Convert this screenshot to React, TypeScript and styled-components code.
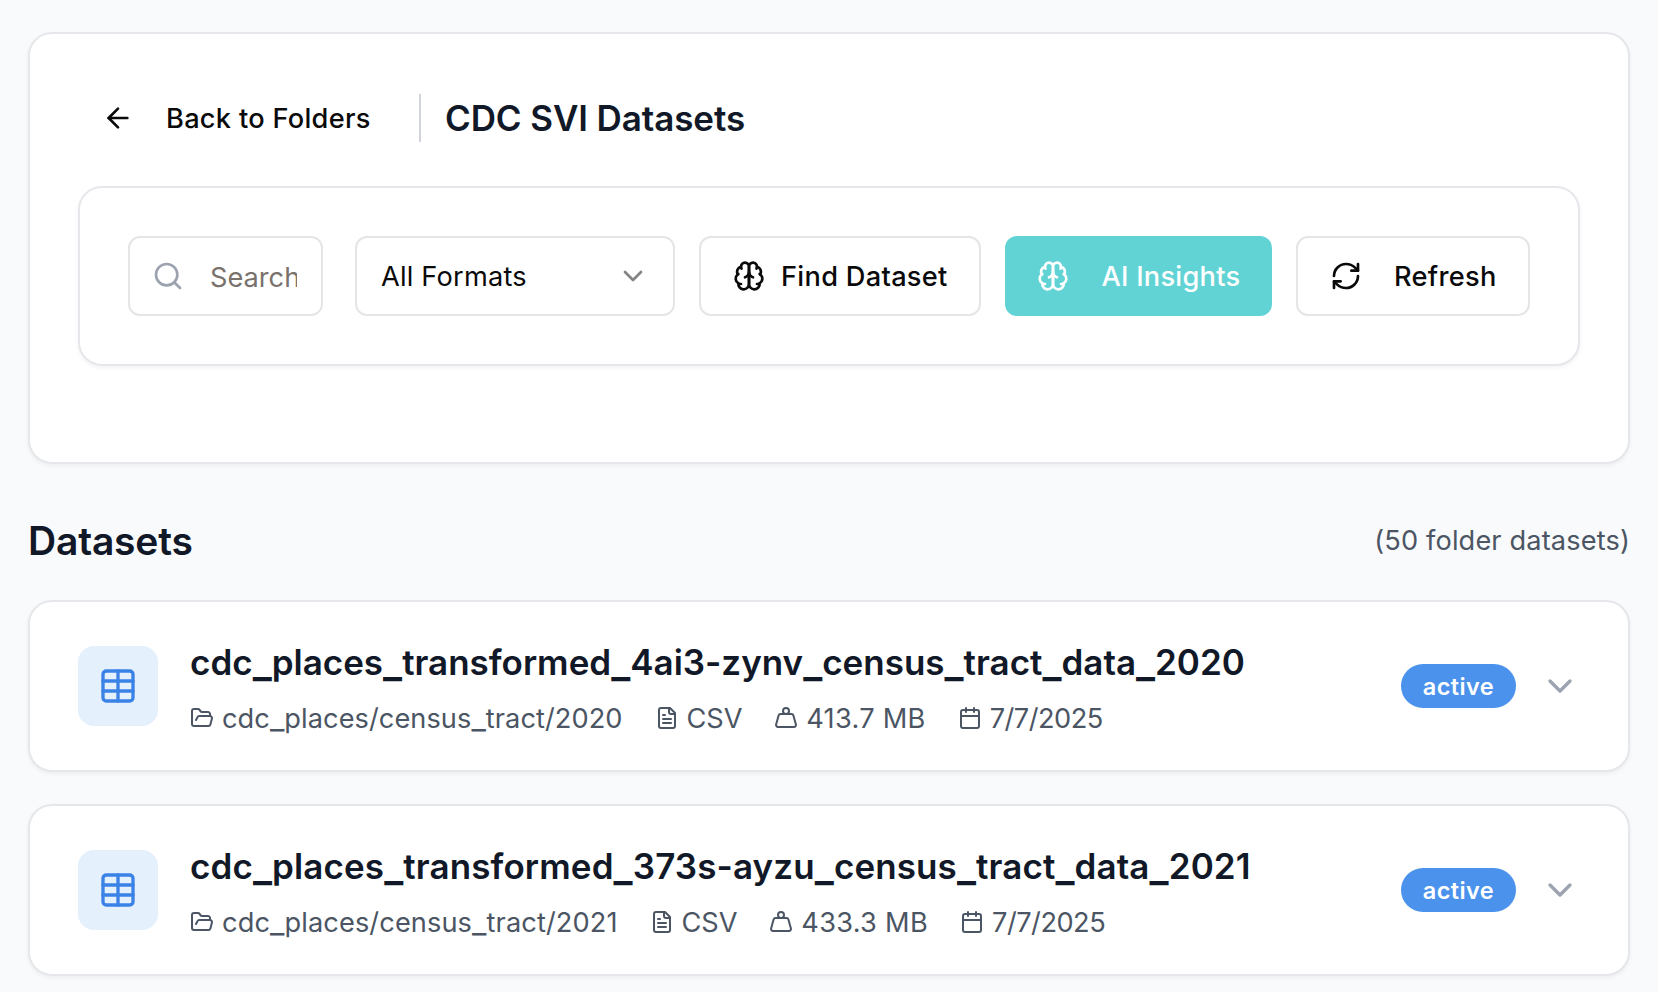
import React from "react";
import styled, { createGlobalStyle } from "styled-components";
import {
  ArrowLeft,
  Calendar,
  ChevronDown,
  FolderOpen,
  RefreshCw,
  Search,
  Table,
  Weight,
} from "lucide-react";

const GlobalStyle = createGlobalStyle`
  *, *::before, *::after { box-sizing: border-box; }
  body {
    margin: 0;
    background: #f9fafc;
    font-family: Inter, "Liberation Sans", sans-serif;
    overflow: hidden;
  }
  svg { display: block; flex-shrink: 0; }
`;

const Page = styled.main`
  display: flex;
  flex-direction: column;
  height: 992px;
  padding: 32px 28px 0;
  background: #f9fafc;
`;

const Card = styled.section`
  background: #fff;
  border: 2px solid #e5e7eb;
  border-radius: 24px;
  box-shadow: 0 2px 4px rgba(0, 0, 0, 0.05);
`;

const HeaderCard = styled(Card)`
  height: 432px;
  padding: 36px 48px 48px;
`;

const TitleRow = styled.div`
  display: flex;
  align-items: center;
  gap: 24px;
  height: 96px;
`;

const BackButton = styled.button`
  display: flex;
  align-items: center;
  gap: 32px;
  width: 317px;
  height: 72px;
  padding: 0 0 0 24px;
  border: 0;
  background: none;
  color: #0a0a0a;
  font: 500 27.2px/40px Inter, sans-serif;
  white-space: nowrap;
`;

const Divider = styled.span`
  width: 2px;
  height: 48px;
  background: #d1d5db;
`;

const PageTitle = styled.h1`
  margin: 0;
  color: #111827;
  font-size: 35px;
  font-weight: 600;
  line-height: 56px;
  letter-spacing: -0.1px;
  white-space: nowrap;
`;

const Toolbar = styled(Card)`
  display: flex;
  gap: 24px;
  height: 180px;
  margin-top: 20px;
  padding: 48px;
`;

const SearchBox = styled.label`
  display: flex;
  align-items: center;
  gap: 26px;
  width: 195px;
  height: 80px;
  margin-right: 8px;
  padding: 0 24px 0 22px;
  border: 2px solid #e5e5e5;
  border-radius: 12px;
  color: #9ca3af;
`;

const SearchInput = styled.input`
  flex: 1;
  min-width: 0;
  height: 46px;
  padding: 2px 0 0;
  border: 0;
  outline: 0;
  background: none;
  font: 400 27.2px/44px Inter, sans-serif;
  &::placeholder { color: #78716c; opacity: 1; }
`;

const Select = styled.button`
  display: flex;
  align-items: center;
  justify-content: space-between;
  width: 320px;
  height: 80px;
  padding: 0 24px;
  border: 2px solid #e5e5e5;
  border-radius: 12px;
  background: #fff;
  color: #0a0a0a;
  font: 400 27.2px/40px Inter, sans-serif;
  svg { opacity: 0.5; }
`;

const Button = styled.button<{ $width: number; $gap: number; $primary?: boolean }>`
  display: flex;
  align-items: center;
  gap: ${(p) => p.$gap}px;
  width: ${(p) => p.$width}px;
  height: 80px;
  padding: 0 0 0 32px;
  border: ${(p) => (p.$primary ? "0" : "2px solid #e5e5e5")};
  border-radius: 12px;
  background: ${(p) => (p.$primary ? "#62d3d4" : "#fff")};
  color: ${(p) => (p.$primary ? "#fff" : "#0a0a0a")};
  font: 500 27.2px/40px Inter, sans-serif;
  white-space: nowrap;
`;

const Label = styled.span<{ $track?: number }>`
  padding-top: 2px;
  letter-spacing: ${(p) => p.$track ?? 0}px;
`;

const ListHeader = styled.div`
  display: flex;
  align-items: center;
  justify-content: space-between;
  height: 56px;
  margin: 49px 0 31px;
`;

const ListTitle = styled.h2`
  margin: 0;
  color: #111827;
  font-size: 39px;
  font-weight: 600;
  line-height: 56px;
  letter-spacing: -0.2px;
`;

const Count = styled.span`
  color: #4b5563;
  font-size: 27.2px;
  line-height: 40px;
  letter-spacing: 0.13px;
`;

const List = styled.div`
  display: flex;
  flex-direction: column;
  gap: 32px;
`;

const DatasetCard = styled(Card)`
  display: flex;
  align-items: center;
  height: 172px;
  padding: 0 48px;
`;

const Tile = styled.div`
  display: grid;
  place-items: center;
  width: 80px;
  height: 80px;
  margin-right: 32px;
  border-radius: 16px;
  background: #e4f0fc;
  color: #3b82e6;
`;

const Info = styled.div`
  flex: 1;
  min-width: 0;
  padding-top: 3px;
`;

const Name = styled.h3<{ $track: number }>`
  margin: 0 0 9px;
  height: 52px;
  color: #111827;
  font-size: 35px;
  font-weight: 600;
  line-height: 52px;
  letter-spacing: ${(p) => p.$track}px;
  white-space: nowrap;
`;

const WideUnderscore = styled.span`
  font-size: 1.16em;
  line-height: 0;
  vertical-align: -0.04em;
`;

const Meta = styled.div`
  display: flex;
  gap: 32px;
  height: 42px;
  color: #4b5563;
  font-size: 27.2px;
  line-height: 40px;
`;

const MetaItem = styled.span`
  display: flex;
  align-items: center;
  gap: 8px;
  white-space: nowrap;
`;

const Badge = styled.span`
  width: 115px;
  height: 44px;
  padding-top: 1px;
  margin-right: 24px;
  border-radius: 22px;
  background: #4a92ec;
  color: #fff;
  font-size: 23.5px;
  font-weight: 600;
  line-height: 44px;
  letter-spacing: 0.4px;
  text-align: center;
`;

const Expand = styled.span`
  color: #9ca3af;
`;

const Outline = styled.svg.attrs({
  viewBox: "0 0 24 24",
  fill: "none",
  stroke: "currentColor",
  strokeWidth: 2,
  strokeLinecap: "round",
  strokeLinejoin: "round",
})``;

const BrainIcon = () => (
  <Outline width={32} height={32}>
    <path d="M12 5a3 3 0 1 0-5.997.125 4 4 0 0 0-2.526 5.77 4 4 0 0 0 .556 6.588A4 4 0 1 0 12 18Z" />
    <path d="M12 5a3 3 0 1 1 5.997.125 4 4 0 0 1 2.526 5.77 4 4 0 0 1-.556 6.588A4 4 0 1 1 12 18Z" />
    <path d="M15 13a4.5 4.5 0 0 1-3-4 4.5 4.5 0 0 1-3 4" />
    <path d="M17.599 6.5a3 3 0 0 0 .399-1.375" />
    <path d="M6.003 5.125A3 3 0 0 0 6.401 6.5" />
    <path d="M3.477 10.896a4 4 0 0 1 .585-.396" />
    <path d="M19.938 10.5a4 4 0 0 1 .585.396" />
    <path d="M6 18a4 4 0 0 1-1.967-.516" />
    <path d="M19.967 17.484A4 4 0 0 1 18 18" />
  </Outline>
);

const FileIcon = () => (
  <Outline width={24} height={24}>
    <path d="M15 2H6a2 2 0 0 0-2 2v16a2 2 0 0 0 2 2h12a2 2 0 0 0 2-2V7Z" />
    <path d="M14 2v4a2 2 0 0 0 2 2h4" />
    <path d="M10 9H8" />
    <path d="M16 13H8" />
    <path d="M16 17H8" />
  </Outline>
);

const Identifier = ({ text }: { text: string }) => (
  <>
    {text.split(/(_)/).map((part, i) =>
      part === "_" ? <WideUnderscore key={i}>_</WideUnderscore> : part
    )}
  </>
);

const datasets = [
  {
    name: "cdc_places_transformed_4ai3-zynv_census_tract_data_2020",
    nameTrack: 0,
    path: "cdc_places/census_tract/2020",
    pathTrack: 0.06,
    size: "413.7 MB",
    date: "7/7/2025",
  },
  {
    name: "cdc_places_transformed_373s-ayzu_census_tract_data_2021",
    nameTrack: 0.11,
    path: "cdc_places/census_tract/2021",
    pathTrack: 0.1,
    size: "433.3 MB",
    date: "7/7/2025",
  },
];

export default function App() {
  return (
    <>
      <GlobalStyle />
      <Page>
        <HeaderCard>
          <TitleRow>
            <BackButton>
              <ArrowLeft size={32} />
              <Label $track={0.29}>Back to Folders</Label>
            </BackButton>
            <Divider />
            <PageTitle>CDC SVI Datasets</PageTitle>
          </TitleRow>
          <Toolbar>
            <SearchBox>
              <Search size={32} />
              <SearchInput placeholder="Search" />
            </SearchBox>
            <Select>
              <Label $track={0.2}>All Formats</Label>
              <ChevronDown size={32} />
            </Select>
            <Button $width={282} $gap={16}>
              <BrainIcon />
              <Label $track={0.3}>Find Dataset</Label>
            </Button>
            <Button $width={267} $gap={32.5} $primary>
              <BrainIcon />
              <Label $track={0.25}>AI Insights</Label>
            </Button>
            <Button $width={234} $gap={32}>
              <RefreshCw size={32} />
              <Label $track={0.3}>Refresh</Label>
            </Button>
          </Toolbar>
        </HeaderCard>
        <ListHeader>
          <ListTitle>Datasets</ListTitle>
          <Count>(50 folder datasets)</Count>
        </ListHeader>
        <List>
          {datasets.map((d) => (
            <DatasetCard key={d.name}>
              <Tile>
                <Table size={40} />
              </Tile>
              <Info>
                <Name $track={d.nameTrack}>
                  <Identifier text={d.name} />
                </Name>
                <Meta>
                  <MetaItem>
                    <FolderOpen size={24} />
                    <Label $track={d.pathTrack}>
                      <Identifier text={d.path} />
                    </Label>
                  </MetaItem>
                  <MetaItem>
                    <FileIcon />
                    <Label $track={-0.1}>CSV</Label>
                  </MetaItem>
                  <MetaItem>
                    <Weight size={24} />
                    <Label $track={0.28}>{d.size}</Label>
                  </MetaItem>
                  <MetaItem>
                    <Calendar size={24} />
                    <Label $track={-0.5}>{d.date}</Label>
                  </MetaItem>
                </Meta>
              </Info>
              <Badge>active</Badge>
              <Expand>
                <ChevronDown size={40} />
              </Expand>
            </DatasetCard>
          ))}
        </List>
      </Page>
    </>
  );
}
